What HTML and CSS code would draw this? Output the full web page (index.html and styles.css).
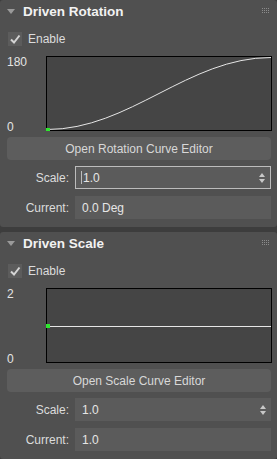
FILE: index.html
```html
<!doctype html>
<html lang="en">
  <head>
    <meta charset="UTF-8" />
    <title>Driven Controls</title>
    <link rel="stylesheet" href="styles.css">
  </head>
  <body>
    <div class="panel">
      <div class="panel-head">
        <span class="caret"></span>
        <span class="panel-title">Driven Rotation</span>
        <svg class="grip" width="7" height="5" viewBox="0 0 7 5">
          <g fill="#8c8c8c">
            <rect x="0" y="0" width="1" height="1"/><rect x="2" y="0" width="1" height="1"/><rect x="4" y="0" width="1" height="1"/><rect x="6" y="0" width="1" height="1"/>
            <rect x="0" y="2" width="1" height="1"/><rect x="2" y="2" width="1" height="1"/><rect x="4" y="2" width="1" height="1"/><rect x="6" y="2" width="1" height="1"/>
            <rect x="0" y="4" width="1" height="1"/><rect x="2" y="4" width="1" height="1"/><rect x="4" y="4" width="1" height="1"/><rect x="6" y="4" width="1" height="1"/>
          </g>
        </svg>
      </div>

      <label class="check-row">
        <span class="check">
          <svg width="14" height="14" viewBox="0 0 14 14"><path d="M3 7.5 L6 10.5 L11.5 3.5" fill="none" stroke="#d4d4d4" stroke-width="2"/></svg>
        </span>
        Enable
      </label>

      <div class="graph-row">
        <div class="axis">
          <span>180</span>
          <span>0</span>
        </div>
        <svg class="graph" width="226" height="75" viewBox="0 0 226 75">
          <rect x="0.5" y="0.5" width="225" height="74" fill="#454545" stroke="#000"/>
          <path d="M1 73.5 C 84 73.5 142 1.5 225 1.5" fill="none" stroke="#e6e6e6" stroke-width="1"/>
          <rect x="0" y="72" width="4" height="4" fill="#2ee82e"/>
        </svg>
      </div>

      <button class="wide-btn">Open Rotation Curve Editor</button>

      <div class="field-row">
        <span class="field-label">Scale:</span>
        <div class="field focused">
          <span class="cursor"></span>1.0
          <span class="spin"><i class="up"></i><i class="down"></i></span>
        </div>
      </div>
      <div class="field-row">
        <span class="field-label">Current:</span>
        <div class="field">0.0 Deg</div>
      </div>
    </div>

    <div class="panel">
      <div class="panel-head">
        <span class="caret"></span>
        <span class="panel-title">Driven Scale</span>
        <svg class="grip" width="7" height="5" viewBox="0 0 7 5">
          <g fill="#8c8c8c">
            <rect x="0" y="0" width="1" height="1"/><rect x="2" y="0" width="1" height="1"/><rect x="4" y="0" width="1" height="1"/><rect x="6" y="0" width="1" height="1"/>
            <rect x="0" y="2" width="1" height="1"/><rect x="2" y="2" width="1" height="1"/><rect x="4" y="2" width="1" height="1"/><rect x="6" y="2" width="1" height="1"/>
            <rect x="0" y="4" width="1" height="1"/><rect x="2" y="4" width="1" height="1"/><rect x="4" y="4" width="1" height="1"/><rect x="6" y="4" width="1" height="1"/>
          </g>
        </svg>
      </div>

      <label class="check-row">
        <span class="check">
          <svg width="14" height="14" viewBox="0 0 14 14"><path d="M3 7.5 L6 10.5 L11.5 3.5" fill="none" stroke="#d4d4d4" stroke-width="2"/></svg>
        </span>
        Enable
      </label>

      <div class="graph-row">
        <div class="axis">
          <span>2</span>
          <span>0</span>
        </div>
        <svg class="graph" width="226" height="75" viewBox="0 0 226 75">
          <rect x="0.5" y="0.5" width="225" height="74" fill="#454545" stroke="#000"/>
          <line x1="1" y1="38.5" x2="225" y2="38.5" stroke="#e6e6e6" stroke-width="1"/>
          <rect x="0" y="36" width="4" height="4" fill="#2ee82e"/>
        </svg>
      </div>

      <button class="wide-btn">Open Scale Curve Editor</button>

      <div class="field-row">
        <span class="field-label">Scale:</span>
        <div class="field">
          1.0
          <span class="spin"><i class="up"></i><i class="down"></i></span>
        </div>
      </div>
      <div class="field-row">
        <span class="field-label">Current:</span>
        <div class="field">1.0</div>
      </div>
    </div>
  </body>
</html>
```

FILE: styles.css
```css
body {
  font-family: 'Liberation Sans', Arial, sans-serif;
  font-size: 12px;
  color: #dcdcdc;
  margin: 0;
  background-color: #3d3d3d;
  display: flex;
  flex-direction: column;
  gap: 5px;
  width: 277px;
}
.panel {
  background-color: #505050;
  border-radius: 3px;
  padding: 0 6px 8px 7px;
  display: flex;
  flex-direction: column;
}
.panel-head {
  height: 22px;
  display: flex;
  align-items: center;
  margin-left: -7px;
  margin-right: -6px;
}
.caret {
  width: 0;
  height: 0;
  margin-left: 7px;
  border-left: 4px solid transparent;
  border-right: 4px solid transparent;
  border-top: 5px solid #9a9a9a;
}
.panel-title {
  margin-left: 8px;
  font-weight: bold;
  font-size: 13.5px;
  color: #f2f2f2;
  flex-grow: 1;
}
.grip {
  margin-right: 8px;
  margin-top: -2px;
}
.check-row {
  display: flex;
  align-items: center;
  height: 14px;
  margin-top: 10px;
  margin-left: 1px;
  gap: 6px;
  font-size: 12px;
}
.check {
  width: 14px;
  height: 14px;
  background-color: #5c5c5c;
  display: block;
}
.check svg {
  display: block;
}
.graph-row {
  display: flex;
  margin-top: 10px;
  margin-right: -1px;
}
.axis {
  width: 39px;
  display: flex;
  flex-direction: column;
  justify-content: space-between;
  line-height: 12px;
  font-size: 12px;
  color: #e4e4e4;
  margin-bottom: -2px;
}
.graph {
  display: block;
}
.wide-btn {
  margin-top: 6px;
  height: 23px;
  border: none;
  border-radius: 4px;
  background-color: #5d5d5d;
  color: #d8d8d8;
  font-family: inherit;
  font-size: 12px;
  padding: 0;
}
.field-row {
  display: flex;
  align-items: center;
  gap: 6px;
  margin-top: 6px;
}
.field-row + .field-row {
  margin-top: 7px;
}
.field-label {
  width: 62px;
  text-align: right;
}
.field {
  flex-grow: 1;
  height: 23px;
  box-sizing: border-box;
  background-color: #5b5b5b;
  color: #e6e6e6;
  display: flex;
  align-items: center;
  padding-left: 7px;
}
.field.focused {
  border: 1px solid #bcbcbc;
  padding-left: 6px;
}
.cursor {
  width: 1px;
  height: 13px;
  background-color: #bcbcbc;
  margin-right: 1px;
  margin-left: -1px;
}
.spin {
  margin-left: auto;
  margin-right: 5px;
  display: flex;
  flex-direction: column;
  gap: 2px;
}
.spin i {
  width: 0;
  height: 0;
  border-left: 3px solid transparent;
  border-right: 3px solid transparent;
}
.spin .up {
  border-bottom: 4px solid #c8c8c8;
}
.spin .down {
  border-top: 4px solid #c8c8c8;
}
```
